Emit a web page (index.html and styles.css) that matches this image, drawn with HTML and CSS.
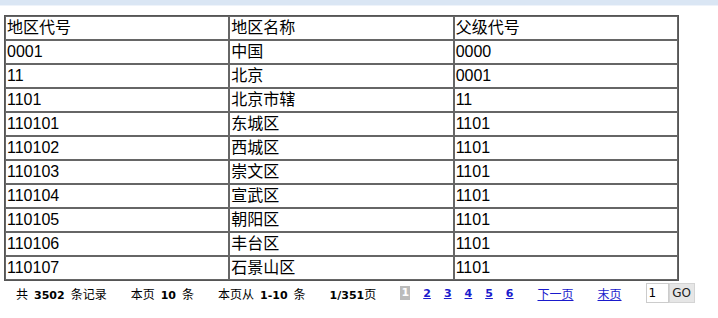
FILE: index.html
```html
<!DOCTYPE html>
<html lang="zh">
<head>
<meta charset="utf-8">
<title>地区代码</title>
<link rel="stylesheet" href="styles.css">
</head>
<body>
<div class="topbar"></div>
<table class="grid">
  <tr><td>地区代号</td><td>地区名称</td><td>父级代号</td></tr>
  <tr><td>0001</td><td>中国</td><td>0000</td></tr>
  <tr><td>11</td><td>北京</td><td>0001</td></tr>
  <tr><td>1101</td><td>北京市辖</td><td>11</td></tr>
  <tr><td>110101</td><td>东城区</td><td>1101</td></tr>
  <tr><td>110102</td><td>西城区</td><td>1101</td></tr>
  <tr><td>110103</td><td>崇文区</td><td>1101</td></tr>
  <tr><td>110104</td><td>宣武区</td><td>1101</td></tr>
  <tr><td>110105</td><td>朝阳区</td><td>1101</td></tr>
  <tr><td>110106</td><td>丰台区</td><td>1101</td></tr>
  <tr><td>110107</td><td>石景山区</td><td>1101</td></tr>
</table>
<div class="pager">
  <span class="grp">共<b>3502</b>条记录</span>
  <span class="grp">本页<b>10</b>条</span>
  <span class="grp">本页从<b>1-10</b>条</span>
  <span class="grp"><b class="nb">1/351</b>页</span>
  <span class="pages">
    <span class="cur">1</span>
    <a href="#">2</a>
    <a href="#">3</a>
    <a href="#">4</a>
    <a href="#">5</a>
    <a href="#">6</a>
  </span>
  <a class="nav" href="#">下一页</a>
  <a class="nav" href="#">末页</a>
  <span class="jump"><input class="pgin" type="text" value="1"><button class="go" type="button">GO</button></span>
</div>
</body>
</html>
```
FILE: styles.css
```css
html, body {
  margin: 0;
  padding: 0;
  background: #fff;
}
body {
  font-family: "Liberation Sans", "Noto Sans CJK SC", sans-serif;
  color: #000;
}
.topbar {
  height: 5px;
  background: #dae6f4;
  border-bottom: 1px solid #eef3fa;
}
.grid {
  margin: 9px 0 0 4px;
  width: 675px;
  border-collapse: separate;
  border-spacing: 0;
  border: 1px solid #555;
  table-layout: fixed;
}
.grid td {
  border: 1px solid #666;
  height: 22px;
  line-height: 22px;
  padding: 0 1px;
  font-size: 16px;
  vertical-align: middle;
  white-space: nowrap;
  overflow: hidden;
}
.pager {
  display: flex;
  align-items: center;
  gap: 24px;
  padding: 2px 0 0 16px;
  font-size: 12px;
  height: 20px;
  font-family: "Noto Sans CJK SC", "DejaVu Sans", sans-serif;
}
.grp b {
  font-family: "DejaVu Sans", sans-serif;
  font-weight: bold;
  font-size: 11px;
  margin: 0 6px;
}
.grp b.nb {
  margin: 0;
}
.pages {
  display: flex;
  align-items: center;
  gap: 13px;
}
.pages a {
  font-family: "DejaVu Sans", sans-serif;
  font-weight: bold;
  font-size: 11px;
  color: #1a1acc;
  text-decoration: underline;
}
.cur {
  display: inline-block;
  width: 10px;
  height: 14px;
  line-height: 14px;
  text-align: center;
  background: #bbb;
  color: #fff;
  font-family: "DejaVu Sans", sans-serif;
  font-weight: bold;
  font-size: 11px;
}
.nav {
  color: #1a1acc;
  text-decoration: underline;
}
.jump {
  display: flex;
  align-items: center;
}
.pgin {
  box-sizing: border-box;
  width: 23px;
  height: 20px;
  border: 1px solid #ccc;
  padding: 0 2px;
  margin: 0;
  font-size: 12px;
  font-family: "DejaVu Sans", sans-serif;
}
.go {
  width: 26px;
  height: 20px;
  margin: 0;
  padding: 0;
  border: 1px solid #d4d4d4;
  background: #e6e6e6;
  font-size: 12px;
  font-family: "DejaVu Sans", sans-serif;
  color: #222;
}
```
